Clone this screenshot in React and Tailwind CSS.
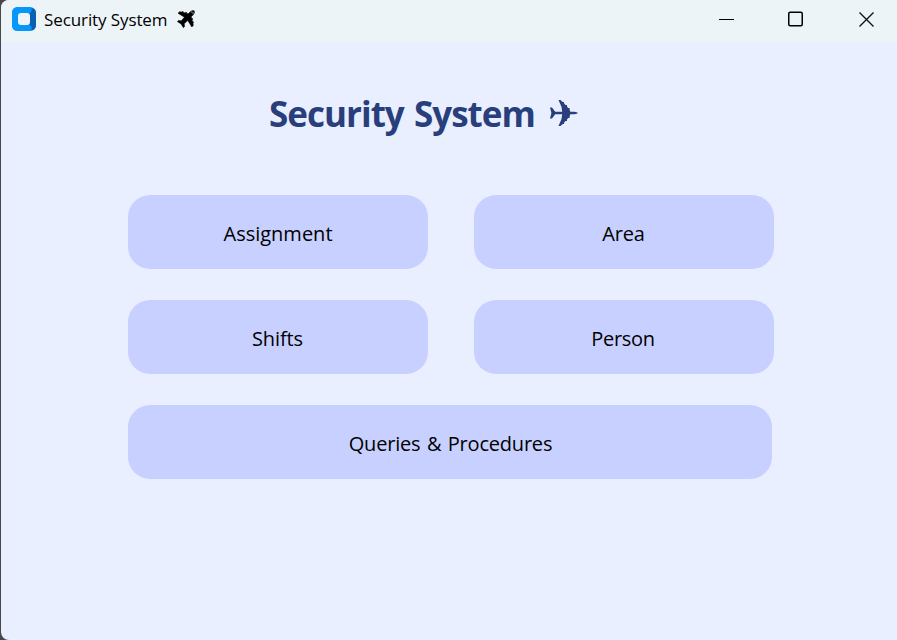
import React from 'react';

function AppIcon() {
  return (
    <svg className="block h-6 w-6 shrink-0" viewBox="0 0 24 24">
      <rect width="24" height="24" rx="6" fill="#0797fb" />
      <path d="M16 5.5L19.5 1Q24 2 24 6V18Q24 22.5 19.5 23.5L17 18V7Z" fill="#0a5fb0" />
      <path d="M4 0H18.5Q20.5 2 19.5 4L17.5 7H6V17.5H17.5L19.5 20Q20.5 22 18.5 24H6Q0 24 0 18V6Q0 0 6 0Z" fill="#0797fb" />
      <rect x="6" y="6" width="12" height="12" rx="3" fill="#edf5f9" />
    </svg>
  );
}

function TitlePlane() {
  return (
    <svg className="ml-[9px] block h-[18px] w-[18px] shrink-0" viewBox="0 0 18 18">
      <path
        d="M17.2 .8Q15.2 -.1 13.3 1.7L11.2 3.8L9.8 3.4V2.6L8.6 2.3L8 2.9L6.4 2.5V1.8L5.2 1.5L4.5 2L2.6 1.7L1 3.2L7.4 7.2L4.3 10.8L1.6 10.4L.3 11.6L4 13.9L6.4 17.7L7.6 16.4L7.2 13.7L10.8 10.6L14.8 17L16.3 15.4L16 13.5L16.5 12.8L16.2 11.6H15.5L15.1 10L15.7 9.4L15.4 8.2H14.6L14.2 6.8L16.3 4.7Q18.1 2.8 17.2 .8Z"
        fill="#000"
        stroke="#000"
        strokeWidth=".5"
      />
      <path d="M13.9 2.2L15.2 1.8L16.2 2.8L15.8 4.1" fill="none" stroke="#cfd6d8" strokeWidth=".7" />
    </svg>
  );
}

function HeadingPlane() {
  return (
    <svg className="ml-[15px] block h-[28px] w-[28px] shrink-0" viewBox="0 0 28 28">
      <path
        d="M0 8.5H2L5.2 12.7H12.2L11.5 8L8.5 1H10.5L12.7 3H14V4.3L15.5 6H17V7.5L18.2 9H19.6V10.5L20.3 12.7H24.5Q27 13 28 14Q27 15 24.5 15.3H20.3L19.6 17.5V19H18.2L17 20.5V22H15.5L14 23.7V25H12.7L10.5 27H8.5L11.5 20L12.2 15.3H5.2L2 19.5H0L1.4 14Z"
        fill="#293f7c"
      />
    </svg>
  );
}

function MenuButton({ label, className, textClass }) {
  return (
    <button className={`flex h-[74px] items-center justify-center rounded-[22px] bg-[#c8d0ff] text-[20px] leading-none text-black ${className}`}>
      <span className={`block whitespace-nowrap pt-[3px] ${textClass}`}>{label}</span>
    </button>
  );
}

export default function App() {
  return (
    <div className="h-[640px] w-[897px] overflow-hidden bg-[#48474b] font-['Open_Sans','Noto_Sans',sans-serif]">
      <div className="ml-px flex h-full flex-col overflow-hidden rounded-l-[8px] bg-[#e9efff]">
        <header className="flex h-[42px] shrink-0 items-start bg-[#ecf4f8] pl-[11px]">
          <div className="flex h-[38px] items-center">
            <AppIcon />
            <span className="ml-2 block w-[124px] whitespace-nowrap text-[17px] leading-none tracking-[-0.1px] text-black">Security System</span>
            <TitlePlane />
          </div>
          <div className="ml-auto flex h-[38px] items-center pr-[22px]">
            <svg className="block h-4 w-4" viewBox="0 0 16 16"><path d="M0 8.5H15" stroke="#000" /></svg>
            <svg className="ml-[53px] block h-4 w-4" viewBox="0 0 16 16"><rect x=".75" y="1.25" width="13.5" height="13.5" rx="1.5" fill="none" stroke="#000" strokeWidth="1.5" /></svg>
            <svg className="ml-[55px] block h-4 w-4" viewBox="0 0 16 16"><path d="M.5 1.5L14.5 15.5M14.5 1.5L.5 15.5" stroke="#111" strokeWidth="1.4" /></svg>
          </div>
        </header>
        <main className="pl-[127px]">
          <h1 className="mt-[57px] flex h-[28px] items-center pl-[141px] text-[35px] font-bold leading-none text-[#293f7c]">
            <span className="block w-[266px] whitespace-nowrap tracking-[-0.98px] [word-spacing:2px]">Security System</span>
            <HeadingPlane />
          </h1>
          <div className="mt-[68px] flex flex-col gap-[31px]">
            <div className="flex gap-[46px]">
              <MenuButton label="Assignment" className="w-[300px]" textClass="tracking-normal" />
              <MenuButton label="Area" className="w-[300px]" textClass="pr-px tracking-[-0.2px]" />
            </div>
            <div className="flex gap-[46px]">
              <MenuButton label="Shifts" className="w-[300px]" textClass="pr-px tracking-[-0.1px]" />
              <MenuButton label="Person" className="w-[300px]" textClass="pr-[2px] tracking-[-0.3px]" />
            </div>
            <MenuButton label="Queries & Procedures" className="w-[644px]" textClass="pl-px tracking-[-0.2px] [word-spacing:1.5px]" />
          </div>
        </main>
      </div>
    </div>
  );
}
